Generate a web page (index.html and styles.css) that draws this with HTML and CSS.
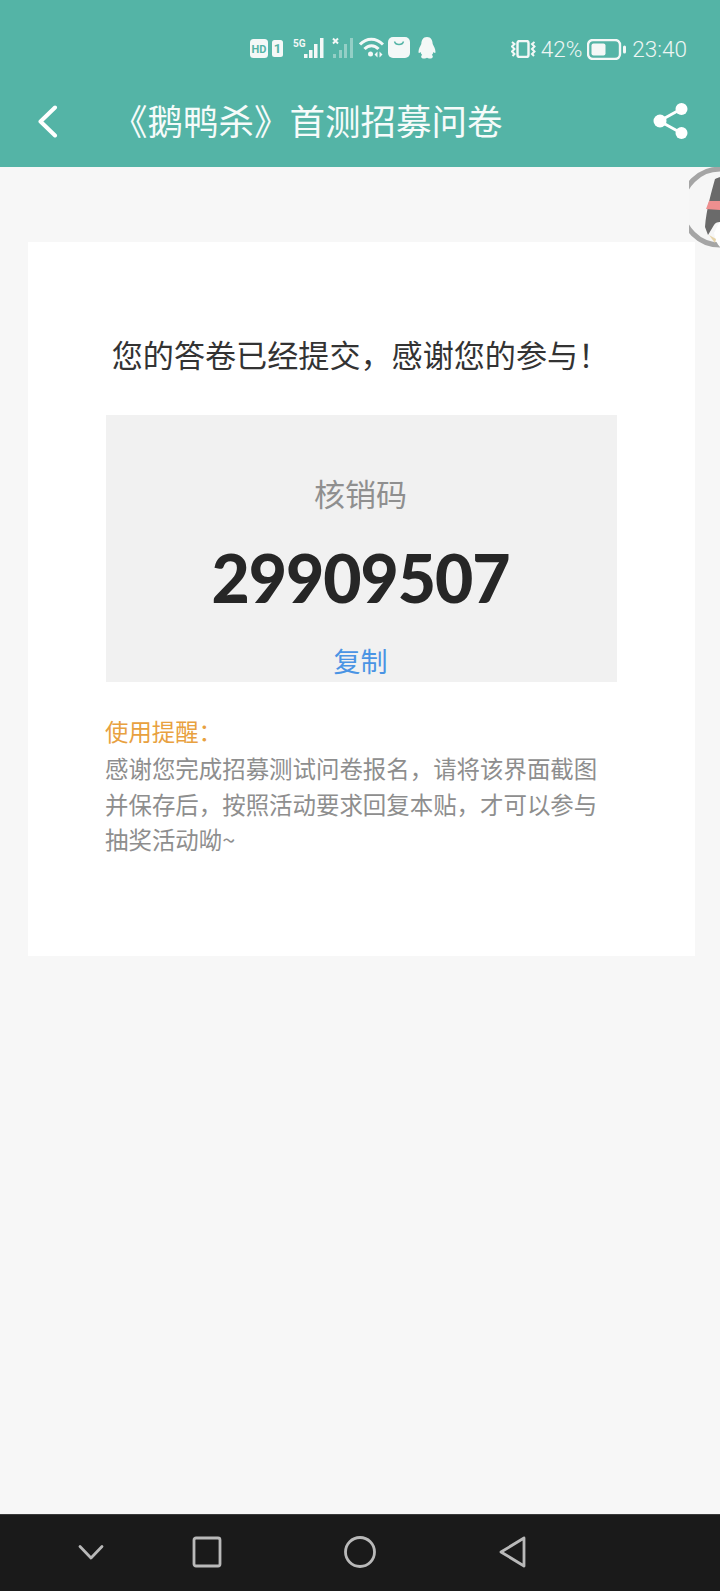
FILE: index.html
```html
<!DOCTYPE html>
<html lang="zh">
<head>
<meta charset="utf-8">
<title>《鹅鸭杀》首测招募问卷</title>
<link rel="stylesheet" href="styles.css">
</head>
<body>
<div class="page">
  <header class="header">
    <div class="status">
      <div class="status-left">
        <svg class="ic" width="33" height="19" viewBox="0 0 33 19"><rect x="0" y="0" width="18" height="19" rx="3.5" fill="#f4f8f7"/><text x="9" y="14" text-anchor="middle" class="hd">HD</text><rect x="22" y="1" width="11" height="17" rx="2.5" fill="#f4f8f7"/><text x="27.5" y="14" text-anchor="middle" class="sim">1</text></svg>
        <svg class="ic sig" width="32" height="22" viewBox="0 0 32 22"><text x="0" y="10" class="fiveg">5G</text><g fill="#f4f8f7"><rect x="11" y="17" width="3.500" height="4"/><rect x="16" y="13" width="3.500" height="8"/><rect x="21" y="7" width="3.500" height="14"/><rect x="27" y="1" width="3.500" height="20"/></g></svg>
        <svg class="ic sig2" width="22" height="22" viewBox="0 0 22 22"><path d="M1 1.500l5 5M6 1.500l-5 5" stroke="#f4f8f7" stroke-width="2" fill="none"/><g fill="#f4f8f7" opacity=".4"><rect x="1" y="17" width="3" height="4"/><rect x="7" y="13" width="3" height="8"/><rect x="12" y="7" width="3" height="14"/><rect x="18" y="1" width="3" height="20"/></g></svg>
        <svg class="ic wifi" width="25" height="21" viewBox="0 0 25 21"><g fill="none" stroke="#f4f8f7" stroke-width="3"><path d="M1 7.500C7.500 .5 17 .5 24 7.500"/><path d="M5.500 12C9.500 7.500 15.500 7.500 19.500 12"/></g><rect x="9" y="14.500" width="5" height="5" rx="2.500" fill="#f4f8f7"/><path d="M18.500 14.500l-3 3 3 3zM20.500 14.500l3 3-3 3z" fill="#f4f8f7"/></svg>
        <svg class="ic bag" width="22" height="21" viewBox="0 0 22 21"><rect width="22" height="21" rx="5" fill="#f4f8f7"/><path d="M6.500 4.500c1 4 8 4 9 0" fill="none" stroke="#54b4a6" stroke-width="1.400"/></svg>
        <svg class="ic qq" width="18" height="22" viewBox="0 0 18 22"><path d="M9 0C4.800 0 3.400 3.500 3.300 7 2 9.500.6 12 .5 15c0 1.300.7 1.300 2 .1.300 1.200 1 2.200 1.700 2.900C2.800 18.700 2.300 21.500 6 21.500c1.500 0 2.300-.5 3-.8.700.3 1.500.8 3 .8 3.700 0 3.200-2.800 1.800-3.500.7-.7 1.400-1.700 1.700-2.900 1.300 1.200 2 1.200 2-.1-.1-3-1.500-5.500-2.800-8C14.600 3.500 13.200 0 9 0z" fill="#f4f8f7"/></svg>
      </div>
      <div class="status-right">
        <svg class="ic" width="25" height="18" viewBox="0 0 25 18"><rect x="6.500" y="1" width="11" height="16" rx="2" fill="none" stroke="#f4f8f7" stroke-width="2.400"/><path d="M1 2l2.500 2-2.500 2.500 2.500 2.500-2.500 2.500 2.500 2.500-2 2M23.500 2l-2.500 2 2.500 2.500L21 9l2.500 2.500L21 14l2 2" fill="none" stroke="#f4f8f7" stroke-width="2"/></svg>
        <span class="pct">42%</span>
        <svg class="ic" width="39" height="21" viewBox="0 0 39 21"><rect x="1" y="1" width="32" height="19" rx="5" fill="none" stroke="#f4f8f7" stroke-width="2.400"/><rect x="4.500" y="4.500" width="14" height="12" rx="2" fill="#f4f8f7"/><rect x="36" y="6.500" width="3" height="8" rx="1.500" fill="#f4f8f7"/></svg>
        <span class="time">23:40</span>
      </div>
    </div>
    <div class="toolbar">
      <svg class="back" width="21" height="33" viewBox="0 0 21 33"><path d="M18 2.500L3.500 16.500 18 30.500" fill="none" stroke="#fff" stroke-width="4" stroke-linecap="round" stroke-linejoin="round"/></svg>
      <h1 class="title">《鹅鸭杀》首测招募问卷</h1>
      <svg class="share" width="36" height="38" viewBox="0 0 36 38"><path d="M6.500 19L29 6.500M6.500 19L29 31.500" stroke="#fff" stroke-width="3" fill="none"/><circle cx="7" cy="19" r="6.500" fill="#fff"/><circle cx="28.500" cy="7" r="6" fill="#fff"/><circle cx="28.500" cy="31" r="6" fill="#fff"/></svg>
    </div>
  </header>
  <main class="main">
    <section class="card">
      <h2 class="done">您的答卷已经提交，感谢您的参与！</h2>
      <div class="codebox">
        <div class="codelabel">核销码</div>
        <div class="code">29909507</div>
        <div class="copy">复制</div>
      </div>
      <div class="tip-title">使用提醒：</div>
      <p class="tip">感谢您完成招募测试问卷报名，请将该界面截图并保存后，按照活动要求回复本贴，才可以参与抽奖活动呦~</p>
    </section>
  </main>
  <svg class="float" width="31" height="84" viewBox="13 0 31 84">
    <circle cx="44" cy="42" r="38" fill="#f6f6f6" stroke="#a5a5a5" stroke-width="5"/>
    <path d="M29 62C30 45 36 25 39 14c2-1 5-2 5-2v45c-3 0-5 1-6 3l-6 10z" fill="#6a6a6a"/>
    <path d="M33 36h11v9l-14-1z" fill="#ee8f8f"/>
    <path d="M38 68c2-3 3-8 6-11v25c-3-3-5-8-6-14z" fill="#fff"/>
    <path d="M33 70l7 4-1 4z" fill="#e6d3a8"/>
  </svg>
  <nav class="nav">
    <svg class="nav-ic" width="40" height="40" viewBox="0 0 40 40"><path d="M9 14.500L20 26 31 14.500" fill="none" stroke="#b9b9b9" stroke-width="2.800" stroke-linecap="round" stroke-linejoin="round"/></svg>
    <svg class="nav-ic g1" width="40" height="40" viewBox="0 0 40 40"><rect x="7" y="6" width="26" height="28" rx="2" fill="none" stroke="#b9b9b9" stroke-width="2.800"/></svg>
    <svg class="nav-ic g2" width="40" height="40" viewBox="0 0 40 40"><circle cx="20" cy="20" r="14.500" fill="none" stroke="#b9b9b9" stroke-width="2.800"/></svg>
    <svg class="nav-ic g2" width="40" height="40" viewBox="0 0 40 40"><path d="M31 6L8 20 31 34z" fill="none" stroke="#b9b9b9" stroke-width="2.800" stroke-linejoin="round"/></svg>
  </nav>
</div>
</body>
</html>
```
FILE: styles.css
```css
* { box-sizing: border-box; margin: 0; padding: 0; }
html, body { width: 720px; height: 1591px; overflow: hidden; }
body { font-family: "Noto Sans CJK SC", "Noto Sans", sans-serif; background: #f7f7f7; }
.page { position: relative; width: 720px; height: 1591px; display: flex; flex-direction: column; overflow: hidden; }

.header { position: relative; z-index: 1; height: 167px; background: #54b4a6; color: #fff; flex: none; }
.status { height: 81px; padding: 37px 33px 0 250px; display: flex; justify-content: space-between; align-items: flex-start; }
.status-left { display: flex; align-items: flex-start; }
.status-right { display: flex; align-items: center; height: 22px; margin-top: 1px; color: #eef6f4; font-family: Roboto, sans-serif; font-weight: 300; font-size: 22.500px; }
.ic { display: block; flex: none; }
.status-left .ic:first-child { margin-top: 2px; }
.sig { margin-left: 10px; }
.sig2 { margin-left: 7px; }
.wifi { margin-left: 5px; }
.bag { margin-left: 4px; }
.qq { margin-left: 8px; }
.hd { font: 700 11px Roboto, sans-serif; fill: #54b4a6; }
.sim { font: 700 13px Roboto, sans-serif; fill: #54b4a6; }
.fiveg { font: 700 10px Roboto, sans-serif; fill: #f4f8f7; }
.pct { margin-left: 5px; }
.status-right .pct + .ic { margin-left: 5px; }
.time { margin-left: 6px; }

.toolbar { height: 86px; padding: 20px 31px 0 37px; display: flex; align-items: flex-start; }
.back { display: block; flex: none; margin-top: 4px; }
.title { flex: 1; margin-left: 54px; font-size: 35.500px; font-weight: 400; line-height: 38px; color: #f6fbfa; white-space: nowrap; }
.share { display: block; flex: none; margin-top: 1px; }

.main { flex: 1; padding: 75px 25px 0 28px; }
.card { height: 714px; background: #fff; padding: 89px 78px 0 78px; }
.done { font-size: 31.100px; font-weight: 400; line-height: 46px; color: #333; text-align: center; white-space: nowrap; padding-right: 2px; }
.codebox { margin-top: 38px; height: 267px; background: #f1f1f1; display: flex; flex-direction: column; align-items: center; padding: 55px 2px 0 0; }
.codelabel { font-size: 31px; line-height: 46px; color: #8f8f8f; }
.code { font-family: Lato, sans-serif; font-weight: 900; font-size: 66px; line-height: 70px; color: #262626; margin-top: 27px; letter-spacing: -1px; }
.copy { font-size: 27px; line-height: 40px; color: #4a94e4; margin-top: 28px; }
.tip-title { margin: 31px 0 0 -1px; font-size: 23.400px; line-height: 36px; color: #e8a13f; }
.tip { margin: 2px 0 0 -1px; font-size: 23.450px; line-height: 35.500px; color: #8e8e8e; }

.float { position: absolute; right: 0; top: 165px; display: block; }

.nav { flex: none; height: 77px; background: #1a1a1a; border-top: 1px solid #3a3a3a; padding: 17px 0 0 71px; display: flex; align-items: flex-start; }
.nav-ic { display: block; flex: none; }
.g1 { margin-left: 76px; }
.g2 { margin-left: 113px; }
```
